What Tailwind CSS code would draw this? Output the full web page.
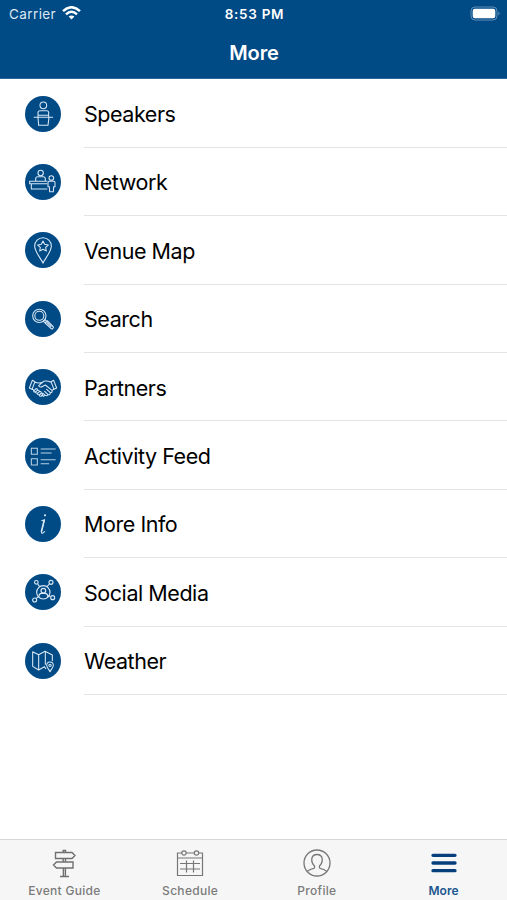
<!DOCTYPE html>
<html lang="en">
<head>
<meta charset="utf-8">
<title>More</title>
<script src="https://cdn.jsdelivr.net/npm/@tailwindcss/browser@4"></script>
</head>
<body class="bg-white">
<div class="flex h-[900px] w-[507px] flex-col overflow-hidden bg-white font-['Inter',sans-serif] text-black">
  <header class="h-[79px] shrink-0 border-b border-[#2a669b] bg-[#004a86] text-white">
    <div class="grid h-7 grid-cols-3 items-center pr-[6px] pl-[9px]">
      <div class="flex items-center gap-[6px] text-[13.5px] text-[#dce8f3]"><span class="tracking-[0.4px]">Carrier</span>
        <svg class="-mt-[2px] h-[14px] w-[19px]" viewBox="0 0 19 14" fill="none" stroke="#fff" stroke-width="2.5"><path d="M1 5.2Q9.500-2.700 18 5.200M4 8.300Q9.500 3.300 15 8.300"/><path d="M9.500 13.500L6.600 10.600Q9.500 8.200 12.400 10.600Z" fill="#fff" stroke="none"/></svg>
      </div>
      <div class="pr-[1px] text-center text-[13.5px] font-semibold tracking-[0.7px] whitespace-nowrap">8:53 PM</div>
      <svg class="h-[15px] w-[31px] justify-self-end -mt-[1px]" viewBox="0 0 31 15"><rect x="1" y="1" width="26" height="13" rx="4" fill="none" stroke="#6190b8"/><rect x="2.700" y="2.700" width="22.600" height="9.600" rx="2.200" fill="#fff"/><path d="M28.500 5.500Q30.500 7.500 28.500 9.500Z" fill="#7fa4c4"/></svg>
    </div>
    <h1 class="mt-[10px] pl-[1px] text-center text-[20px] leading-[30px] font-semibold tracking-[-0.1px]">More</h1>
  </header>

  <ul class="pt-[0.5px] text-[21.5px] tracking-[-0.45px]">
    <li class="flex h-[68.4px] items-center pl-[24.5px]">
      <svg class="size-9 shrink-0" viewBox="25 21 108 108" fill="none" stroke="#d8e8f5" stroke-width="3.200"><circle cx="79" cy="75" r="54" fill="#004a86" stroke="none"/><circle cx="80" cy="49" r="10"/><path d="M64 84V71Q64 65 70 65H90Q96 65 96 71V84M51 85H109M64 85L66 109H94L97 85M64 79H96"/></svg>
      <span class="ml-[23.5px] flex h-full flex-1 items-center border-b border-[#e4e4e6] pt-[2px]">Speakers</span>
    </li>
    <li class="flex h-[68.4px] items-center pl-[24.5px]">
      <svg class="size-9 shrink-0" viewBox="25 23 108 108" fill="none" stroke="#d8e8f5" stroke-width="3.200"><circle cx="79" cy="77" r="54" fill="#004a86" stroke="none"/><circle cx="72" cy="50" r="8"/><path d="M57 75V67Q57 61 64 61H79Q86 61 86 67V75M92 75H39V82H92M44 82V98H92"/><circle cx="104" cy="65" r="7"/><path d="M96 75H112Q115 75 115 79V91H111L110 106H99L98 91H94V79Q94 75 97 75"/></svg>
      <span class="ml-[23.5px] flex h-full flex-1 items-center border-b border-[#e4e4e6] pt-[2px]">Network</span>
    </li>
    <li class="flex h-[68.4px] items-center pl-[24.5px]">
      <svg class="size-9 shrink-0" viewBox="25 24 108 108" fill="none" stroke="#d8e8f5" stroke-width="3.200"><circle cx="79" cy="78" r="54" fill="#004a86" stroke="none"/><path d="M79 117C73 104 54 83 54 66A25 25 0 0 1 104 66C104 83 85 104 79 117Z"/><path stroke-linejoin="round" d="M79 51L84 61L95 63L87 70L89 81L79 76L69 81L71 70L63 63L74 61Z"/></svg>
      <span class="ml-[23.5px] flex h-full flex-1 items-center border-b border-[#e4e4e6] pt-[2px]">Venue Map</span>
    </li>
    <li class="flex h-[68.4px] items-center pl-[24.5px]">
      <svg class="size-9 shrink-0" viewBox="25 25.500 108 108" fill="none" stroke="#d8e8f5" stroke-width="3.200"><circle cx="79" cy="79.500" r="54" fill="#004a86" stroke="none"/><circle cx="68" cy="70" r="20"/><circle cx="68" cy="70" r="13.500"/><path d="M80 86L85 81L90 86L85 91ZM91 84L109 102Q112 105 108 108Q105 111 102 107L84 90M90 89L104 103"/></svg>
      <span class="ml-[23.5px] flex h-full flex-1 items-center border-b border-[#e4e4e6] pt-[2px]">Search</span>
    </li>
    <li class="flex h-[68.4px] items-center pl-[24.5px]">
      <svg class="size-9 shrink-0" viewBox="25 26 108 108" fill="none" stroke="#d8e8f5" stroke-width="3.200" stroke-linejoin="round" stroke-linecap="round"><circle cx="79" cy="80" r="54" fill="#004a86" stroke="none"/><path d="M47 60L38 83L46 87L55 64ZM111 60L120 83L112 87L103 64ZM55 66Q67 70 77 66M103 66Q91 60 81 63L66 76Q69 84 80 77L86 74L106 90Q108 97 101 97Q101 104 94 103Q91 108 86 105L80 108L76 104M47 86L52 91M112 86L106 90M90 87L101 97M84 93L94 103M79 99L86 105"/><path d="M52 91L58 85Q63 84 62 90Q68 88 68 94Q74 92 74 98Q80 98 77 104L73 108Q67 108 68 103Q61 104 62 98Q56 99 56 94Q50 96 52 91M62 90L56 95M68 94L62 100M74 98L68 104"/></svg>
      <span class="ml-[23.5px] flex h-full flex-1 items-center border-b border-[#e4e4e6] pt-[2px]">Partners</span>
    </li>
    <li class="flex h-[68.4px] items-center pl-[24.5px]">
      <svg class="size-9 shrink-0" viewBox="25 22 108 108" fill="none" stroke="#b9d2e6" stroke-width="3.200"><circle cx="79" cy="76" r="54" fill="#004a86" stroke="none"/><path d="M44 53H62V71H44ZM44 84H62V103H44ZM72 55H117M72 67H105M72 87H117M72 99H97"/></svg>
      <span class="ml-[23.5px] flex h-full flex-1 items-center border-b border-[#e4e4e6] pt-[2px]">Activity Feed</span>
    </li>
    <li class="flex h-[68.4px] items-center pl-[24.5px]">
      <svg class="size-9 shrink-0" viewBox="25 227 108 108" fill="none" stroke="#d8e8f5" stroke-width="3.200" stroke-linecap="round" stroke-linejoin="round"><circle cx="79" cy="281" r="54" fill="#004a86" stroke="none"/><circle cx="85" cy="255" r="3.300" fill="#d8e8f5" stroke="none"/><path d="M75 271L84 268L75 304Q73 311 80 307L84 304" /><path d="M82 270L74 303" stroke-width="4"/></svg>
      <span class="ml-[23.5px] flex h-full flex-1 items-center border-b border-[#e4e4e6] pt-[2px]">More Info</span>
    </li>
    <li class="flex h-[68.4px] items-center pl-[24.5px]">
      <svg class="size-9 shrink-0" viewBox="25 24 108 108" fill="none" stroke="#d8e8f5" stroke-width="3.400"><circle cx="79" cy="78" r="54" fill="#004a86" stroke="none"/><circle cx="80" cy="79" r="20"/><circle cx="80" cy="74" r="7"/><path d="M67 93V89Q68 82 75 82H85Q92 82 93 89V93M63 54L69 62M98 54L91 62M58 98L65 92M101 92L95 88"/><circle cx="59" cy="49" r="5.500"/><circle cx="103" cy="49" r="6"/><circle cx="54" cy="102" r="6"/><circle cx="108" cy="95" r="6"/></svg>
      <span class="ml-[23.5px] flex h-full flex-1 items-center border-b border-[#e4e4e6] pt-[2px]">Social Media</span>
    </li>
    <li class="flex h-[68.4px] items-center pl-[24.5px]">
      <svg class="size-9 shrink-0" viewBox="25 26 108 108" fill="none" stroke="#d8e8f5" stroke-width="3.200" stroke-linejoin="round"><circle cx="79" cy="80" r="54" fill="#004a86" stroke="none"/><path d="M88 104L83 97L66 107L48 96V52L66 61L85 51L107 62V80M66 61V107M86 51V91"/><path d="M100 112C97 105 90 100 90 93A10 10 0 0 1 110 93C110 100 103 105 100 112Z"/><circle cx="100" cy="93" r="3.500"/></svg>
      <span class="ml-[23.5px] flex h-full flex-1 items-center border-b border-[#e4e4e6] pt-[2px]">Weather</span>
    </li>
  </ul>

  <nav class="mt-auto grid h-[61px] shrink-0 grid-cols-4 border-t border-[#d6d6d6] bg-[#f6f6f6] text-[12px] font-medium tracking-[0.3px] text-[#7b7b7b]">
    <div class="flex flex-col items-center pt-[8px] pl-[2px]">
      <svg class="h-[30px] w-[30px]" viewBox="0 0 30 30" fill="none" stroke="#707070" stroke-width="1.400"><path d="M6.500 4.500H23L26 7.500L23 10.500H6.500ZM24 14H7.500L4.500 17L7.500 20H24ZM14.200 4.500V2.500H16.500V4.500M14.200 10.500V14M16.500 10.500V14M14.400 20V28.500M16.400 20V28.500M11 28.500H20"/></svg>
      <span class="mt-[5px] leading-[15px]">Event Guide</span>
    </div>
    <div class="flex flex-col items-center pt-[8px]">
      <svg class="h-[30px] w-[30px]" viewBox="0 0 30 30" fill="none" stroke="#777" stroke-width="1.200"><path d="M7 5H2.500V27.500H27.500V5H23.500M11 5H19.500M2.500 10H27.500M5 15.500H25M5 21H25M11.500 12.500V24.500M18.500 12.500V24.500"/><circle cx="9" cy="5" r="2.200"/><circle cx="21.500" cy="5" r="2.200"/></svg>
      <span class="mt-[5px] leading-[15px]">Schedule</span>
    </div>
    <div class="flex flex-col items-center pt-[8px]">
      <svg class="h-[30px] w-[30px]" viewBox="0 0 30 30" fill="none" stroke="#777" stroke-width="1.300"><circle cx="15" cy="15" r="13"/><path d="M5 23.500Q8 21 12 20.300Q13 19.500 12.500 18C8.500 14 8.500 6.500 15 6.500S21.500 14 17.500 18Q17 19.500 18 20.300Q22 21 25 23.500"/></svg>
      <span class="mt-[5px] leading-[15px]">Profile</span>
    </div>
    <div class="flex flex-col items-center pt-[8px] text-[#1b5790]">
      <svg class="h-[30px] w-[30px]" viewBox="0 0 30 30" stroke="#073f7c" stroke-width="3.300" stroke-linecap="round"><path d="M4 7.300H26M4 15H26M4 22.700H26"/></svg>
      <span class="mt-[5px] leading-[15px] font-semibold tracking-[0.1px]">More</span>
    </div>
  </nav>
</div>
</body>
</html>
